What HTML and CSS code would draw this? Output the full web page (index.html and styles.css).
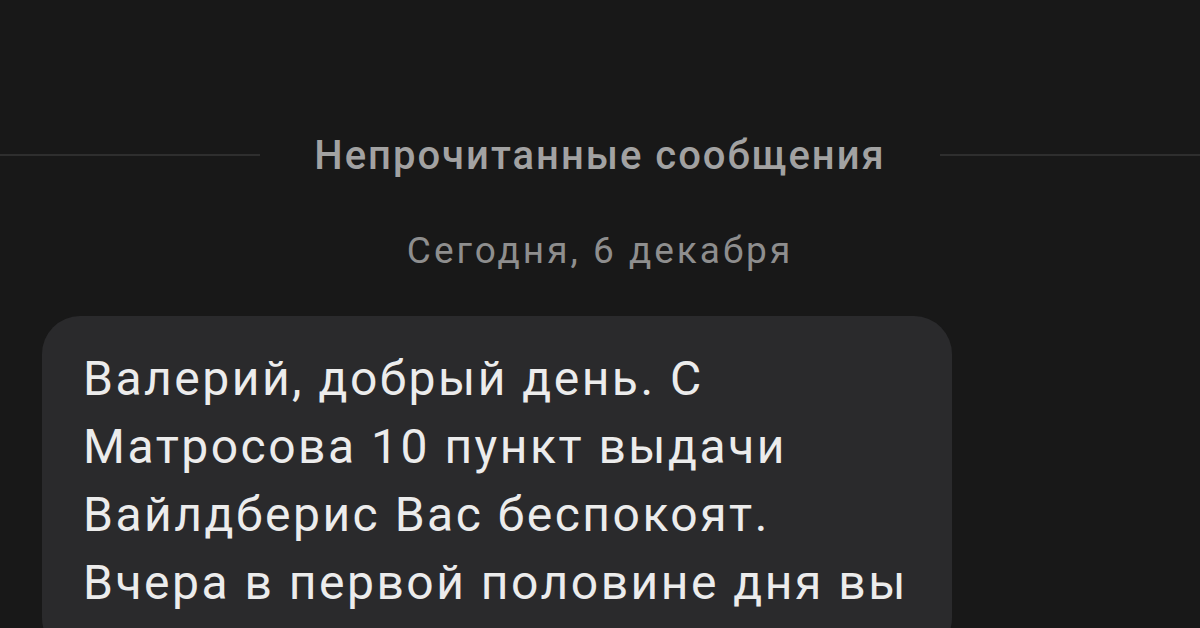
FILE: index.html
```html
<!DOCTYPE html>
<html lang="ru">
<head>
<meta charset="utf-8">
<link rel="stylesheet" href="styles.css">
</head>
<body>
<div class="chat">
  <div class="unread">
    <span class="rule"></span>
    <span class="unread-label">Непрочитанные сообщения</span>
    <span class="rule"></span>
  </div>
  <div class="date">Сегодня, 6 декабря</div>
  <div class="bubble">
    <p class="msg">Валерий, добрый день. С<br>Матросова 10 пункт выдачи<br>Вайлдберис Вас беспокоят.<br>Вчера в первой половине дня вы</p>
  </div>
</div>
</body>
</html>
```

FILE: styles.css
```css
html, body {
  margin: 0;
  padding: 0;
  background: #181818;
  height: 100%;
  overflow: hidden;
}
.chat {
  font-family: Roboto, "Noto Sans", sans-serif;
  padding-top: 128px;
}
.unread {
  display: flex;
  align-items: center;
  gap: 54px;
  height: 54px;
}
.rule {
  flex: 1;
  height: 2px;
  background: #2e2e2e;
}
.unread-label {
  font-size: 40px;
  font-weight: 500;
  letter-spacing: 2px;
  color: #a2a2a2;
  white-space: nowrap;
}
.date {
  text-align: center;
  font-size: 37px;
  letter-spacing: 3px;
  color: #8e8e8e;
  margin-top: 47px;
  line-height: 44px;
}
.bubble {
  margin: 43px 0 0 42px;
  width: 910px;
  height: 340px;
  background: #2a2a2c;
  border-radius: 38px;
  padding: 29px 30px 0 41px;
  box-sizing: border-box;
}
.msg {
  margin: 0;
  font-size: 48px;
  line-height: 68px;
  letter-spacing: 2.5px;
  color: #ececec;
  white-space: nowrap;
}
```
